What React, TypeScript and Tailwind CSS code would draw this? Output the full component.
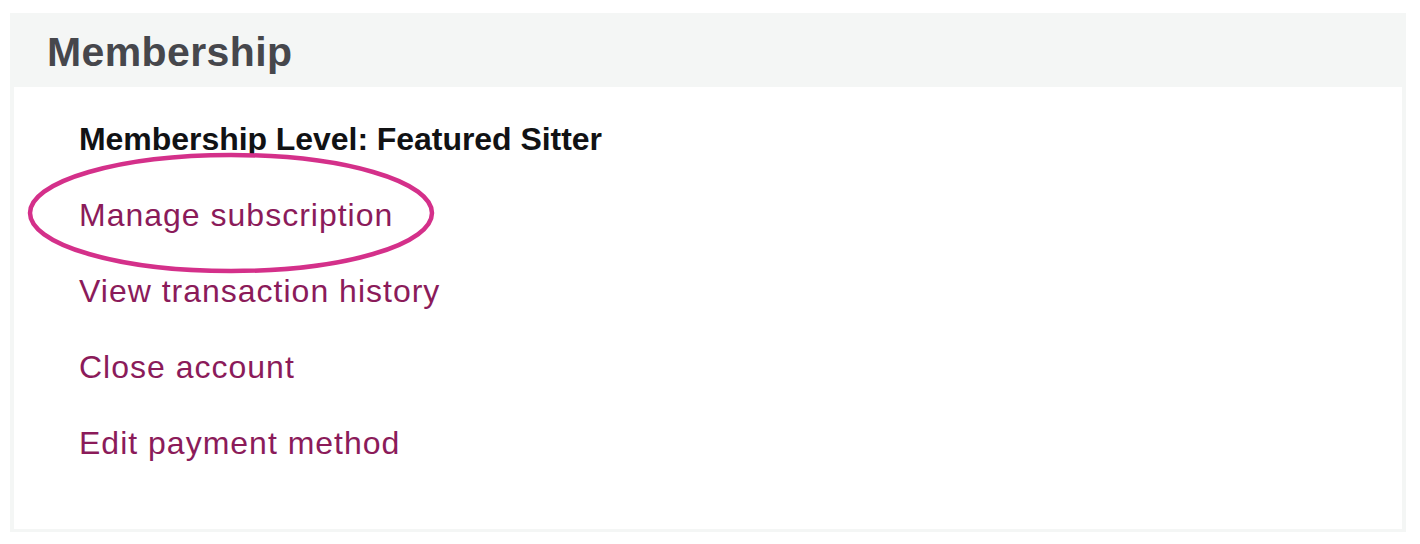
import React from "react";

export default function App() {
  const links = [
    "Manage subscription",
    "View transaction history",
    "Close account",
    "Edit payment method",
  ];
  return (
    <div className="w-[1420px] h-[544px] bg-white pt-[13px] pl-[10px]" style={{ fontFamily: '"Liberation Sans", Arial, sans-serif' }}>
      <div className="w-[1396px] bg-[#f4f6f5] px-[4px] pb-[3px]">
        <div className="h-[74px] pt-[5px] pl-[33px]">
          <h2 className="text-[41px] leading-[69px] font-bold text-[#46474c] tracking-[0.4px]">Membership</h2>
        </div>
        <div className="relative bg-white pl-[65px] pt-[14px] pb-[48px]">
          <div className="text-[32px] leading-[76px] font-bold text-[#111214] tracking-[-0.05px]">
            Membership Level: Featured Sitter
          </div>
          {links.map((l) => (
            <div key={l} className="text-[32px] leading-[76px] text-[#8b1b5a] tracking-[1px]">
              <a href="#" className="cursor-pointer">{l}</a>
            </div>
          ))}
          <svg
            className="absolute left-[12px] top-[64px] pointer-events-none"
            width="410"
            height="124"
            viewBox="0 0 410 124"
          >
            <ellipse cx="205" cy="62" rx="201" ry="58" fill="none" stroke="#d4308a" strokeWidth="4.5" />
          </svg>
        </div>
      </div>
    </div>
  );
}
